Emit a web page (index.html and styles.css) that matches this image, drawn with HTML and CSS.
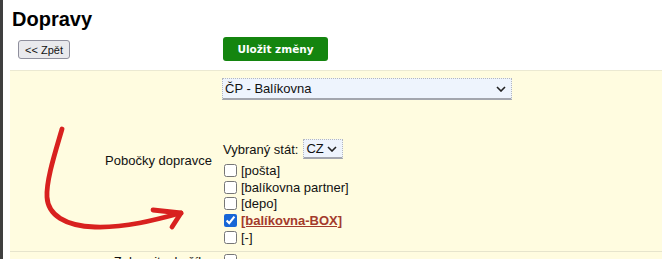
FILE: index.html
```html
<!DOCTYPE html>
<html>
<head>
  <title>Dopravy</title>
  <link rel="stylesheet" href="styles.css">
</head>
<body>
  <div class="page">
    <h1>Dopravy</h1>

    <div class="toolbar">
      <div class="col-label">
        <button class="back-button">&lt;&lt; Zpět</button>
      </div>
      <div class="col-value">
        <button class="save-button">Uložit změny</button>
      </div>
    </div>

    <div class="form">
      <div class="form-row first">
        <div class="col-label"></div>
        <div class="col-value">
          <select class="select wide">
            <option>ČP - Balíkovna</option>
          </select>
        </div>
      </div>

      <div class="form-row branches">
        <div class="col-label label">Pobočky dopravce</div>
        <div class="col-value">
          <div class="state">
            Vybraný stát:
            <select class="select small">
              <option>CZ</option>
            </select>
          </div>
          <label class="opt"><input type="checkbox"> [pošta]</label>
          <label class="opt"><input type="checkbox"> [balíkovna partner]</label>
          <label class="opt"><input type="checkbox"> [depo]</label>
          <label class="opt active"><input type="checkbox" checked> [balíkovna-BOX]</label>
          <label class="opt"><input type="checkbox"> [-]</label>
        </div>
      </div>

      <div class="form-row last">
        <div class="col-label label">Zobrazit v košíku</div>
        <div class="col-value">
          <label class="opt top"><input type="checkbox"></label>
        </div>
      </div>

      <!-- ručně kreslená šipka -->
      <svg class="arrow" width="200" height="130" viewBox="0 0 200 130">
        <g transform="translate(-10 -110)" fill="none" stroke="#d8211f" stroke-width="4.8" stroke-linecap="round" stroke-linejoin="round">
          <path d="M62 129 C 56 150, 46 180, 47 197 C 48 215, 65 226, 95 227 C 125 228, 155 220, 181 213"/>
          <path d="M153 210 L181 213 L172 227"/>
        </g>
      </svg>
    </div>
  </div>
</body>
</html>
```

FILE: styles.css
```css
body {
  margin: 0;
  font-family: "Liberation Sans", Arial, sans-serif;
  font-size: 13px;
  color: #111;
  background-color: #fff;
  overflow: hidden;
}

.page {
  border-left: 3px solid #3f3f3f;
  padding-left: 7px;
  height: 259px;
  overflow: hidden;
}

h1 {
  font-size: 20px;
  font-weight: bold;
  margin: 8px 0 0 2px;
  line-height: 23px;
  color: #000;
}

.toolbar {
  display: grid;
  grid-template-columns: 206px 1fr;
  column-gap: 6px;
  align-items: center;
  padding: 6px 0 9px;
}

.toolbar .col-label {
  padding-left: 8px;
}

.back-button {
  font-family: "Liberation Sans", Arial, sans-serif;
  font-size: 11px;
  color: #111;
  background-color: #e9e9ed;
  border: 1px solid #8f8f9d;
  border-radius: 3px;
  height: 19px;
  width: 52px;
  padding: 0;
  margin-top: 1px;
}

.save-button {
  font-family: "DejaVu Sans", Verdana, sans-serif;
  font-size: 10.5px;
  font-weight: bold;
  color: #fff;
  background-color: #14850f; /* zelené tlačítko */
  border: none;
  border-radius: 3px;
  height: 24px;
  width: 105px;
  margin-left: 1px;
}

.form {
  position: relative;
  background-color: #fffce0; /* světle žluté pozadí */
  border-top: 1px solid #ebe9d2;
}

.form-row {
  display: grid;
  grid-template-columns: 206px 1fr;
  column-gap: 6px;
}

.form-row.first {
  padding: 7px 0 8px;
}

.form-row.branches {
  padding-bottom: 5px;
  border-bottom: 1px solid #e6e4cc;
}

.form-row.branches .col-value {
  padding-top: 31px;
}

.form-row.branches .label {
  padding-top: 45px;
}

.form-row.last {
  padding-top: 2px;
  height: 20px;
}

.label {
  text-align: right;
  padding-right: 4px;
  line-height: 16px;
}

.select {
  appearance: none;
  font-family: "Liberation Sans", Arial, sans-serif;
  font-size: 13px;
  color: #111;
  background-color: #eef4fd;
  background-image: url("data:image/svg+xml,%3Csvg xmlns='http://www.w3.org/2000/svg' width='10' height='6'%3E%3Cpath d='M1 1 L5 5 L9 1' fill='none' stroke='%23222' stroke-width='1.6'/%3E%3C/svg%3E");
  background-repeat: no-repeat;
  border: 1px dotted #b4b8c0;
  border-bottom: 2px solid #a3a6ae;
  border-radius: 0;
  padding: 0 0 0 2px;
}

.select.wide {
  width: 290px;
  height: 22px;
  background-position: right 5px center;
}

.select.small {
  width: 40px;
  height: 20px;
  background-position: right 5px center;
  margin-left: 5px;
}

.state {
  display: flex;
  align-items: center;
  height: 20px;
  padding-left: 1px;
  margin-bottom: 3px;
}

.opt {
  display: flex;
  align-items: center;
  height: 16.8px;
  gap: 4px;
}

.opt.top {
  align-items: flex-start;
}

.opt input {
  width: 13px;
  height: 13px;
  margin: 0 0 0 2px;
  accent-color: #1766d6;
}

.opt.active {
  color: #a33a2c;
  font-weight: bold;
  text-decoration: underline;
}

.arrow {
  position: absolute;
  left: 0;
  top: 39px;
  pointer-events: none;
}
```
